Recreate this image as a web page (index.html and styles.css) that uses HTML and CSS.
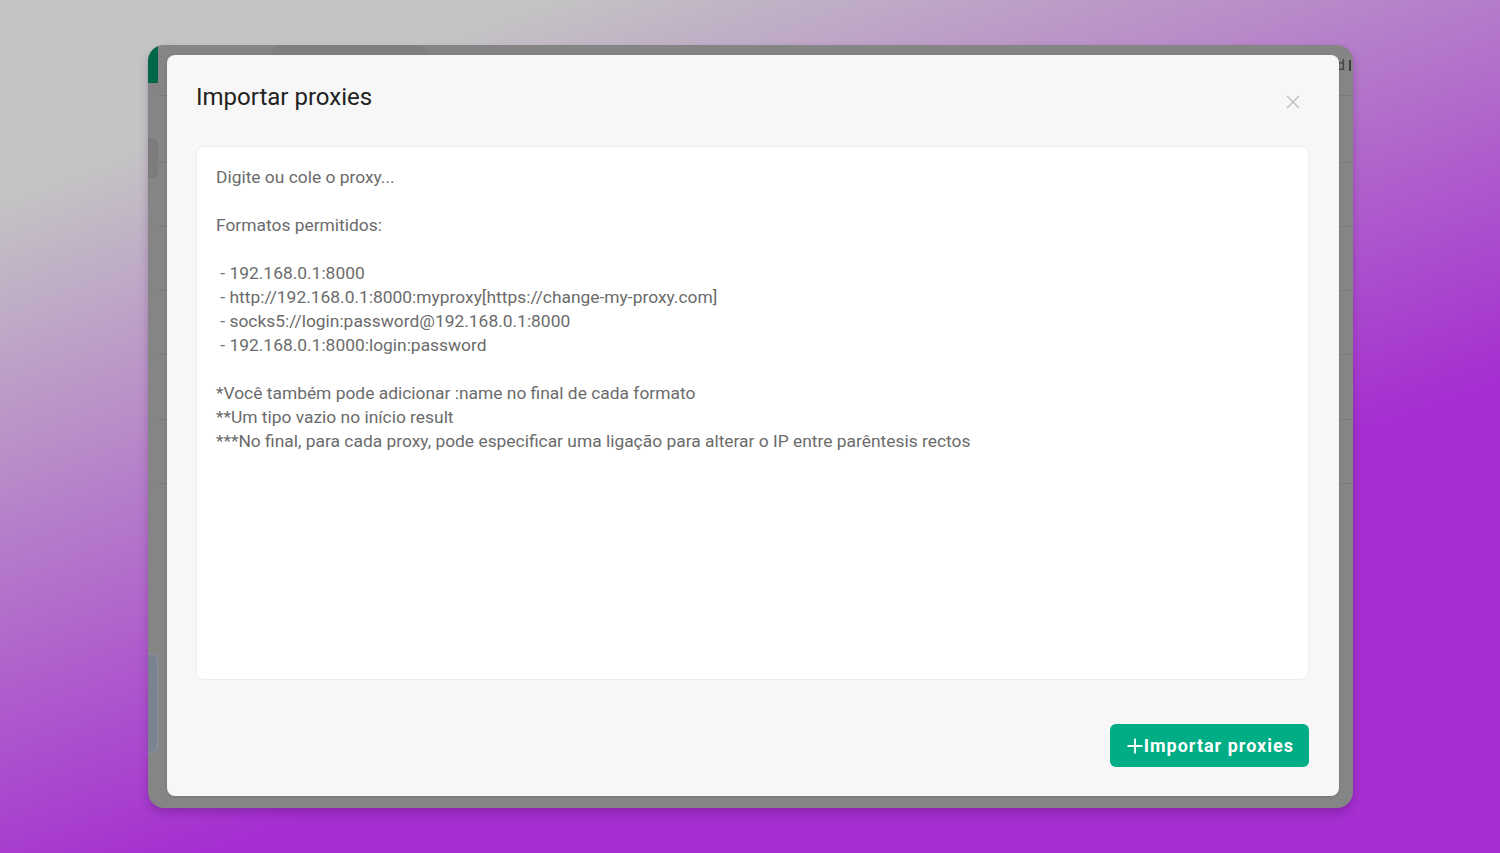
FILE: index.html
```
<!DOCTYPE html>
<html lang="pt">
<head>
<meta charset="utf-8">
<title>Importar proxies</title>
<link rel="stylesheet" href="styles.css">
</head>
<body>
<div class="window">
  <aside class="side">
    <div class="side-logo"></div>
    <div class="side-item"></div>
    <div class="side-badge"></div>
  </aside>
  <main class="app-main">
    <div class="app-top">
      <div class="app-tab"></div>
    </div>
    <div class="thead"><span class="th">Valid</span><span class="col-sep"></span></div>
    <div class="row row-first"></div>
    <div class="row"></div>
    <div class="row"></div>
    <div class="row"></div>
    <div class="row row-tall"></div>
    <div class="row"></div>
  </main>

  <section class="modal" role="dialog" aria-labelledby="modal-title">
    <header class="modal-head">
      <h2 class="modal-title" id="modal-title">Importar proxies</h2>
      <button class="close" aria-label="Fechar">
        <svg viewBox="0 0 14 14" width="14" height="14"><path d="M1 1L13 13M13 1L1 13" stroke="#bdbdbd" stroke-width="1.3" fill="none"/></svg>
      </button>
    </header>
    <div class="field">Digite ou cole o proxy...

Formatos permitidos:

 - 192.168.0.1:8000
 - http://192.168.0.1:8000:myproxy[https://change-my-proxy.com]
 - socks5://login:password@192.168.0.1:8000
 - 192.168.0.1:8000:login:password

*Você também pode adicionar :name no final de cada formato
**Um tipo vazio no início result
***No final, para cada proxy, pode especificar uma ligação para alterar o IP entre parêntesis rectos</div>
    <footer class="modal-foot">
      <button class="btn-import">
        <svg viewBox="0 0 16 16" width="16" height="16"><path d="M8 0.5V15.5M0.5 8H15.5" stroke="#fff" stroke-width="1.8" fill="none"/></svg>
        <span>Importar proxies</span>
      </button>
    </footer>
  </section>
</div>
</body>
</html>
```
FILE: styles.css
```
html, body {
  margin: 0;
  height: 100%;
}

body {
  height: 853px;
  display: flex;
  align-items: center;
  justify-content: center;
  background: linear-gradient(160deg, #c4c4c4 14%, #a52fd0 66%);
  font-family: Roboto, "Noto Sans", "Liberation Sans", sans-serif;
  overflow: hidden;
}

.window {
  position: relative;
  width: 1205px;
  height: 763px;
  margin-left: 1px;
  border-radius: 16px;
  background: #858585;
  overflow: hidden;
  display: flex;
  box-shadow: 0 5px 8px rgba(60, 0, 80, 0.25);
}

/* app behind the dimmed overlay */
.side {
  width: 10px;
  flex: none;
  display: flex;
  flex-direction: column;
}

.side-logo {
  height: 38px;
  background: #006848;
}

.side-item {
  margin-top: 55px;
  height: 40px;
  background: #7c7c7c;
  border-radius: 0 6px 6px 0;
}

.side-badge {
  margin-top: 475px;
  height: 99px;
  background: #7a838f;
  border-radius: 0 8px 8px 0;
  border: 1px solid #8a93a0;
  border-left: none;
}

.app-main {
  flex: 1;
  display: flex;
  flex-direction: column;
}

.app-top {
  height: 10px;
  display: flex;
}

.app-tab {
  margin-left: 112px;
  width: 160px;
  height: 14px;
  background: #7f7f7f;
  border-radius: 12px 12px 0 0;
}

.thead {
  height: 40px;
  display: flex;
  justify-content: flex-end;
  align-items: flex-start;
  border-bottom: 1px solid #7a7a7a;
}

.th {
  margin-top: 2px;
  font-size: 14px;
  line-height: 16px;
  color: #3e3e3e;
  white-space: nowrap;
}

.col-sep {
  width: 2px;
  height: 11px;
  margin: 5px 2px 0 4px;
  background: #3e3e3e;
}

.row {
  height: 63px;
  border-bottom: 1px solid #7a7a7a;
}

.row-first { height: 66px; }
.row-tall { height: 64px; }

/* modal */
.modal {
  position: absolute;
  left: 19px;
  top: 10px;
  width: 1172px;
  height: 741px;
  box-sizing: border-box;
  padding: 27px 30px 29px 29px;
  background: #f7f7f7;
  border-radius: 8px;
  display: flex;
  flex-direction: column;
  box-shadow: 0 1px 3px rgba(0, 0, 0, 0.12);
}

.modal-head {
  height: 30px;
  display: flex;
  justify-content: space-between;
  align-items: flex-start;
}

.modal-title {
  margin: 0;
  font-size: 24px;
  line-height: 30px;
  font-weight: 400;
  color: #222222;
}

.close {
  margin: 13px 9px 0 0;
  padding: 0;
  width: 14px;
  height: 14px;
  border: none;
  background: none;
  display: block;
}

.close svg { display: block; }

.field {
  margin-top: 34px;
  height: 534px;
  box-sizing: border-box;
  padding: 18px 19px;
  background: #ffffff;
  border: 1px solid #ececec;
  border-radius: 8px;
  font-size: 17.4px;
  line-height: 24px;
  color: #6b6b6b;
  white-space: pre-wrap;
}

.modal-foot {
  margin-top: auto;
  display: flex;
  justify-content: flex-end;
}

.btn-import {
  height: 43px;
  padding: 0 15px 0 17px;
  display: flex;
  align-items: center;
  gap: 1px;
  border: none;
  border-radius: 6px;
  background: #00ad84;
  color: #ffffff;
  font-family: Roboto, "Noto Sans", "Liberation Sans", sans-serif;
  font-size: 18px;
  font-weight: 700;
  letter-spacing: 1px;
}

.btn-import svg { display: block; }
```
